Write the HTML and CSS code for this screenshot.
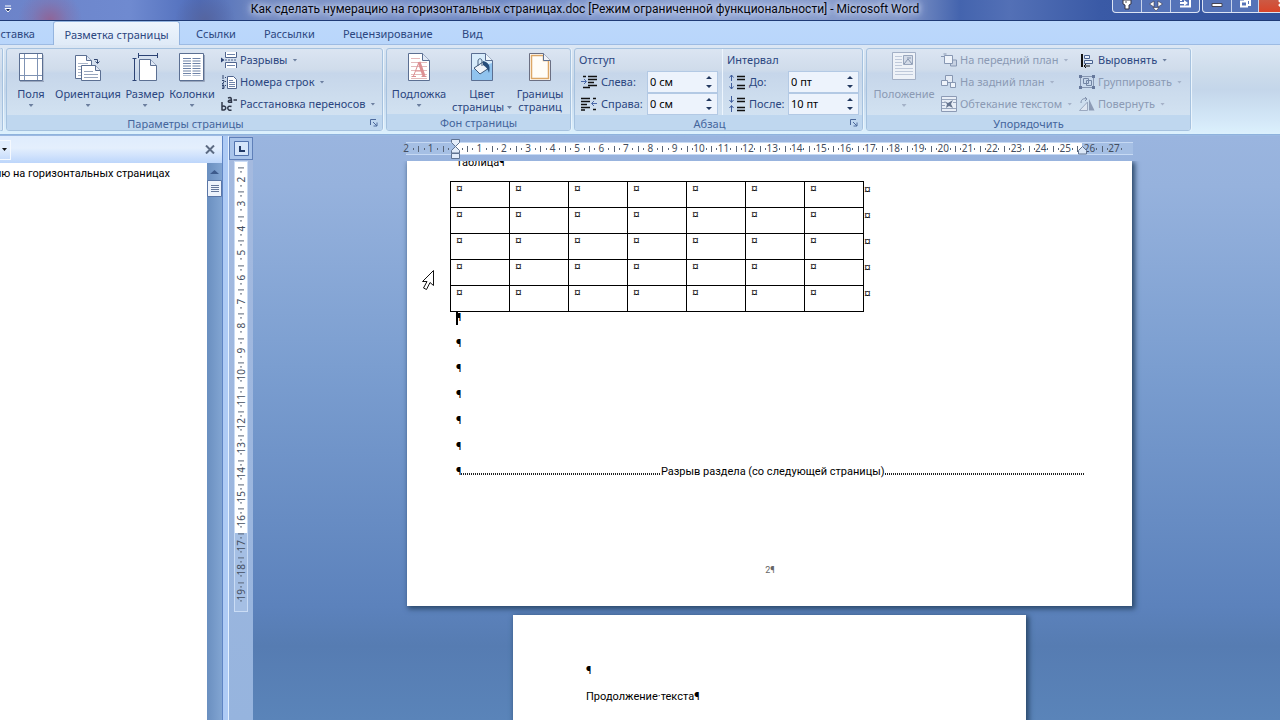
FILE: index.html
```html
<!DOCTYPE html>
<html lang="ru">
<head>
<meta charset="utf-8">
<title>Как сделать нумерацию на горизонтальных страницах.doc - Microsoft Word</title>
<link rel="stylesheet" href="styles.css">
</head>
<body>
<header class="titlebar">
  <button class="qat" aria-label="Настройка панели"><svg width="8" height="8" viewBox="0 0 8 8"><path d="M1 1h6M1 3.500h6L4 7z" stroke="#fff" fill="#10235c"/></svg></button>
  <h1 class="title">Как сделать нумерацию на горизонтальных страницах.doc [Режим ограниченной функциональности] - Microsoft Word</h1>
  <div class="winset">
    <button aria-label="Закрепить"><svg width="28" height="13" viewBox="0 0 28 13"><path d="M10 0h8v4l-2 1v4h-4V5l-2-1z" fill="#fff" stroke="#334"/><path d="M13 1v2" stroke="#555"/></svg></button>
    <button aria-label="Переместить"><svg width="28" height="13" viewBox="0 0 28 13"><path d="M12 1L7.500 4l4.500 3zM16 1l4.500 3-4.500 3zM11 7.500h6L14 11z" fill="#fff" stroke="#334" stroke-width=".6"/></svg></button>
    <button aria-label="Перейти"><svg width="28" height="13" viewBox="0 0 28 13"><path d="M10 0v1M9 6.500h10V0" stroke="#fff" stroke-width="2" fill="none"/><path d="M9 2h4V0l4 3-4 3V4H9z" fill="#fff"/></svg></button>
  </div>
  <div class="winset win">
    <button aria-label="Свернуть"><svg width="28" height="13" viewBox="0 0 28 13"><path d="M9 3.500h10v3H9z" fill="#fff" stroke="#445"/></svg></button>
    <button aria-label="Восстановить"><svg width="26" height="13" viewBox="0 0 26 13"><path d="M9 1.500h6v5H9zM12 0h6v5h-2" fill="none" stroke="#fff" stroke-width="2"/></svg></button>
    <button class="close" aria-label="Закрыть"><svg width="44" height="13" viewBox="0 0 44 13"><path d="M20 0l6 6M26 0l-6 6" stroke="#fff" stroke-width="2.500"/></svg></button>
  </div>
</header>

<nav class="tabs">
  <button class="tab first">ставка</button>
  <button class="tab active">Разметка страницы</button>
  <button class="tab t3">Ссылки</button>
  <button class="tab t4">Рассылки</button>
  <button class="tab t5">Рецензирование</button>
  <button class="tab t6">Вид</button>
</nav>

<div class="ribbon">
  <section class="group stub"></section>

  <section class="group g1">
    <div class="tools">
      <button class="big w48"><svg width="26" height="30" viewBox="0 0 26 30"><path d="M1.500 1.500h23v27h-23z" fill="#fff" stroke="#5b6f92"/><path d="M6.500 2v26M19.500 2v26M2 6.500h22M2 23.500h22" stroke="#7f93b4"/><path d="M2 29.500h24V3" fill="none" stroke="#9aa7bd"/></svg><span>Поля</span><i class="arr"></i></button>
      <button class="big w66"><svg width="28" height="30" viewBox="0 0 28 30"><path d="M1.500 3.500h11l5 5v18h-16z" fill="#fff" stroke="#5b6f92"/><path d="M12.500 3.500v5h5" fill="#dfe8f5" stroke="#5b6f92"/><path d="M4 11.500h10M4 14.500h6M4 17.500h3M4 20.500h3M4 23.500h3" stroke="#a9b5c9"/><path d="M7.500 13.500h14l5 5v10h-19z" fill="#fff" stroke="#5b6f92"/><path d="M21.500 13.500v5h5" fill="#dfe8f5" stroke="#5b6f92"/><path d="M10 19.500h9M10 22.500h14M10 25.500h14" stroke="#96a4bc"/><path d="M20 7.500h3.500V11M21.500 9.500l2 2 2-2" fill="none" stroke="#31456f"/></svg><span>Ориентация</span><i class="arr"></i></button>
      <button class="big w48"><svg width="26" height="30" viewBox="0 0 26 30"><path d="M6.500 3.500h19M6.500 1v5M25.500 1v5M2.500 6.500v22M.5 6.500h4M.5 28.500h4" stroke="#2c4374"/><path d="M7.500 7.500h11l6 6v15h-17z" fill="#fff" stroke="#5b6f92"/><path d="M18.500 7.500v6h6" fill="#dfe8f5" stroke="#5b6f92"/></svg><span>Размер</span><i class="arr"></i></button>
      <button class="big w46"><svg width="26" height="30" viewBox="0 0 26 30"><path d="M.5 1.500h24v27H.5z" fill="#fff" stroke="#5b6f92"/><path d="M8 6v18M17.500 6v18" stroke="#6e83a8" stroke-width="8" stroke-dasharray="1 1.500"/><path d="M1 29.500h24.500V3" fill="none" stroke="#9aa7bd"/></svg><span>Колонки</span><i class="arr"></i></button>
      <div class="list">
        <button class="row"><svg width="16" height="16" viewBox="0 0 16 16"><path d="M4.500 0v5.500h11V0M4.500 16v-5.500h11V16" fill="#fff" stroke="#50658e"/><path d="M6 2.500h8M6 13.500h8" stroke="#6f84aa"/><path d="M4 8h12" stroke="#50658e" stroke-dasharray="2 1"/><path d="M0 5.500L3.500 8 0 10.500z" fill="#2c4374"/></svg><span>Разрывы</span><i class="arr"></i></button>
        <button class="row"><svg width="16" height="16" viewBox="0 0 16 16"><path d="M6.500 2.500h6l3 3v9h-9z" fill="#fff" stroke="#50658e"/><path d="M8 6.500h4M8 8.500h6M8 10.500h6M8 12.500h6" stroke="#6f84aa"/><path d="M2 1v4M1 6.500h2v1.500L1 10h2M1 11.500h2v3H1M1 13h2" fill="none" stroke="#31456f"/><path d="M4.500 3v10" stroke="#31456f" stroke-dasharray="1 3"/></svg><span>Номера строк</span><i class="arr"></i></button>
        <button class="row"><svg width="16" height="16" viewBox="0 0 16 16"><g fill="none" stroke="#30384a" stroke-width="1.500"><path d="M1 6v8.500M1 10.500c5-2 5 4.500 0 3.500M10.500 10.500c-5-2-5 5 0 3.500"/><path d="M7 2c3.500-1.500 3.500 0 3.500 5M10.500 4c-4.500-.5-4 3.500 0 2M12.500 4H16"/></g></svg><span>Расстановка переносов</span><i class="arr"></i></button>
      </div>
    </div>
    <footer class="caption haslaunch"><span>Параметры страницы</span><button class="launch" aria-label="Параметры страницы: открыть"><svg width="8" height="8" viewBox="0 0 8 8"><path d="M.5 6V.5H6M3 3l4 4M7 3.500V7H3.500" fill="none" stroke="#4d6a9c"/></svg></button></footer>
  </section>

  <section class="group g2">
    <div class="tools">
      <button class="big w64"><svg width="24" height="30" viewBox="0 0 24 30"><path d="M1.500 1.500h14l7 7v20h-21z" fill="#fff" stroke="#5b6f92"/><path d="M15.500 1.500v7h7" fill="#dfe8f5" stroke="#5b6f92"/><path d="M4 6.500h9M4 10.500h16M4 14.500h16M4 18.500h16M4 22.500h16M4 26.500h16" stroke="#e3b9bb"/><path d="M6.500 24L12 10" fill="none" stroke="#dc8f92"/><path d="M12 10l5 14" fill="none" stroke="#dc8f92" stroke-width="3"/><path d="M8.500 19h7M4.500 24.500h4.500M14.500 24.500h5" fill="none" stroke="#dc8f92"/></svg><span>Подложка</span><i class="arr"></i></button>
      <button class="big w62"><svg width="24" height="30" viewBox="0 0 24 30"><path d="M1.500 1.500h14l7 7v20h-21z" fill="#90c3ee" stroke="#5b6f92"/><path d="M2 2h13v7h7v2L2 18z" fill="#d8ecfb"/><path d="M15.500 1.500v7h7" fill="#eef5fb" stroke="#5b6f92"/><path d="M4 16l9-6 6 6-9 6z" fill="#eef3f9" stroke="#3f5878"/><path d="M8 14V9c0-3 4-3 4 0v5" fill="none" stroke="#46607e"/><path d="M13 9c5 1 8 4 6 12-1-4-3-6-6-8z" fill="#274d7a"/></svg><span>Цвет<br>страницы<i class="arr inline"></i></span></button>
      <button class="big w54"><svg width="24" height="30" viewBox="0 0 24 30"><path d="M1.500 1.500h14l7 7v20h-21z" fill="#fff" stroke="#6b6f82"/><path d="M3.500 3.500h12v5h5v18h-17z" fill="#fffdf8" stroke="#dca766" stroke-width="1.500"/><path d="M15.500 1.500v7h7" fill="#eef2f8" stroke="#5b6f92"/></svg><span>Границы<br>страниц</span></button>
    </div>
    <footer class="caption"><span>Фон страницы</span></footer>
  </section>

  <section class="group g3">
    <div class="tools">
      <div class="fields indent">
        <h2>Отступ</h2>
        <svg width="16" height="16" viewBox="0 0 16 16"><path d="M2 2.500h3M7 2.500h9M7 5.500h9M7 8.500h6M7 11.500h9M2 13.500h7" stroke="#111" stroke-width="1.500"/><path d="M0 7.500h5M3 5l2.500 2.500L3 10" fill="none" stroke="#4a68a8"/></svg><label for="il">Слева:</label>
        <div class="spin"><input id="il" value="0 см"><button aria-label="Слева"><svg width="8" height="14" viewBox="0 0 8 14"><path d="M1 4l3-3 3 3zM1 10l3 3 3-3z" fill="#22385f"/></svg></button></div>
        <svg width="16" height="16" viewBox="0 0 16 16"><path d="M0 2.500h9M0 5.500h9M0 8.500h6M0 11.500h9M0 14h4M12 2.500h3M12 13.500h3" stroke="#111" stroke-width="1.500"/><path d="M16 7.500h-5M13 5l-2.500 2.500L13 10" fill="none" stroke="#4a68a8"/></svg><label for="ir">Справа:</label>
        <div class="spin"><input id="ir" value="0 см"><button aria-label="Справа"><svg width="8" height="14" viewBox="0 0 8 14"><path d="M1 4l3-3 3 3zM1 10l3 3 3-3z" fill="#22385f"/></svg></button></div>
      </div>
      <div class="fields spacing">
        <h2>Интервал</h2>
        <svg width="16" height="16" viewBox="0 0 16 16"><path d="M8 2.500h8M8 5.500h8M8 11.500h8M8 14.500h8" stroke="#111" stroke-width="1.500"/><path d="M2.500 7V1M.5 3.500l2-2.500 2 2.500M2.500 9v6M.5 12.500l2 2.500 2-2.500" fill="none" stroke="#3f5c9c"/></svg><label for="sb">До:</label>
        <div class="spin"><input id="sb" value="0 пт"><button aria-label="До"><svg width="8" height="14" viewBox="0 0 8 14"><path d="M1 4l3-3 3 3zM1 10l3 3 3-3z" fill="#22385f"/></svg></button></div>
        <svg width="16" height="16" viewBox="0 0 16 16"><path d="M8 2.500h8M8 5.500h8M8 11.500h8M8 14.500h8" stroke="#111" stroke-width="1.500"/><path d="M2.500 0v6M.5 4l2 2.500 2-2.500M2.500 16v-6M.5 12l2-2.500 2 2.500" fill="none" stroke="#3f5c9c"/></svg><label for="sa">После:</label>
        <div class="spin"><input id="sa" value="10 пт"><button aria-label="После"><svg width="8" height="14" viewBox="0 0 8 14"><path d="M1 4l3-3 3 3zM1 10l3 3 3-3z" fill="#22385f"/></svg></button></div>
      </div>
    </div>
    <footer class="caption haslaunch"><span>Абзац</span><button class="launch" aria-label="Абзац: открыть"><svg width="8" height="8" viewBox="0 0 8 8"><path d="M.5 6V.5H6M3 3l4 4M7 3.500V7H3.500" fill="none" stroke="#4d6a9c"/></svg></button></footer>
  </section>

  <section class="group g4">
    <div class="tools">
      <button class="big w74" disabled><svg width="24" height="30" viewBox="0 0 24 30"><path d="M.5.500h23v27H.5z" fill="#eef2f8" stroke="#a3b0c6"/><path d="M3 4.500h7M3 7.500h7M3 10.500h7M3 13.500h7M3 16.500h18M3 19.500h18M3 22.500h18" stroke="#bfc9da"/><path d="M11.500 3.500h9v9h-9z" fill="#d3dbe8" stroke="#98a6bd"/><path d="M12 12l4-5 4 5M15 6h4" stroke="#8594ae" fill="none"/></svg><span>Положение</span><i class="arr"></i></button>
      <div class="list l-a">
        <button class="row" disabled><svg width="16" height="16" viewBox="0 0 16 16"><path d="M0 4.500h3M2.500 2h3M9.500 8h6v6h-6z" fill="#c8d2e2" stroke="#8797b2"/><path d="M3.500 3.500h8v8h-8z" fill="#eef3fa" stroke="#8797b2"/></svg><span>На передний план</span><i class="arr"></i></button>
        <button class="row" disabled><svg width="16" height="16" viewBox="0 0 16 16"><path d="M4.500 1.500h7v7h-7z" fill="#e4ebf5" stroke="#8797b2"/><path d="M.5 6.500h6v5h-6zM9.500 8.500h5v5h-5z" fill="#eef3fa" stroke="#8797b2"/></svg><span>На задний план</span><i class="arr"></i></button>
        <button class="row" disabled><svg width="16" height="16" viewBox="0 0 16 16"><path d="M.5.500h15v15H.5z" fill="#e8eef7" stroke="#8c9ab4"/><path d="M1 3.500h14M1 12.500h14M1 6.500h3M1 9.500h3M12 6.500h3" stroke="#98a6bd"/><path d="M3 5l4 2 5-3-2 4 2 4-4-2-3 2 1-4z" fill="#66758f"/></svg><span>Обтекание текстом</span><i class="arr"></i></button>
      </div>
      <div class="list">
        <button class="row"><svg width="16" height="16" viewBox="0 0 16 16"><path d="M3 2v13" stroke="#111" stroke-width="2"/><path d="M5.500 3.500h5v3h-5zM5.500 8.500h8v3h-8z" fill="#e6eefa" stroke="#4a628f"/><path d="M11 14H5M7 12l-2 2 2 2" stroke="#111" fill="none"/></svg><span>Выровнять</span><i class="arr"></i></button>
        <button class="row" disabled><svg width="16" height="16" viewBox="0 0 16 16"><path d="M1.500 2.500h13v11h-13z" fill="none" stroke="#8797b2"/><path d="M4.500 4.500h5v5h-5zM7.500 6.500h5v5h-5z" fill="none" stroke="#7486a5"/><path d="M0 1h3v3H0zM13 1h3v3h-3zM0 12h3v3H0zM13 12h3v3h-3z" fill="#66789b"/></svg><span>Группировать</span><i class="arr"></i></button>
        <button class="row" disabled><svg width="16" height="16" viewBox="0 0 16 16"><path d="M.5 14.500h8L8.500 6z" fill="#dfe6f1" stroke="#9ba9c0"/><path d="M10 14.500V3l5.500 11.500z" fill="#8d9bb5"/><path d="M2 7c0-4 3-5 6-4M6 1l2 2-2 2" fill="none" stroke="#8191ad"/></svg><span>Повернуть</span><i class="arr"></i></button>
      </div>
    </div>
    <footer class="caption"><span>Упорядочить</span></footer>
  </section>
</div>

<div class="work">
  <aside class="pane">
    <div class="panehead"><button class="combo" aria-label="Вид панели"><i class="arr"></i></button><button class="x" aria-label="Закрыть"><svg width="10" height="9" viewBox="0 0 10 9"><path d="M1 .5l8 8M9 .5l-8 8" stroke="#5c6b83" stroke-width="2"/></svg></button></div>
    <div class="panebody">
      <p class="mapitem"><span>ию на горизонтальных страницах</span></p>
      <div class="scroll"><svg width="15" height="17" viewBox="0 0 15 17"><path d="M3 11l4.500-4 4.500 4z" fill="#3d5b8c"/></svg><svg width="15" height="17" viewBox="0 0 15 17"><path d="M.5.500h14v16H.5z" fill="#eef3fb" stroke="#5a76a6"/><path d="M4 5.500h8M4 7.500h8M4 9.500h8M4 11.500h8" stroke="#66789b"/></svg></div>
    </div>
  </aside>
  <div class="split"></div>
  <div class="gutter">
    <button class="corner" aria-label="Табуляция"><svg width="15" height="15" viewBox="0 0 15 15"><path d="M.5.500h14v14H.5z" fill="#d6e6fa" stroke="#5273ad"/><path d="M6 5v5h5" stroke="#223a66" stroke-width="2" fill="none"/></svg></button>
    <div class="vruler"><b>2</b><b>3</b><b>4</b><b>5</b><b>6</b><b>7</b><b>8</b><b>9</b><b>10</b><b>11</b><b>12</b><b>13</b><b>14</b><b>15</b><b>16</b><b>17</b><b>18</b><b>19</b></div>
  </div>
  <main class="view">
    <div class="rulerbar">
      <div class="hruler"><div class="scale"><b>2</b><b>1</b><b></b><b>1</b><b>2</b><b>3</b><b>4</b><b>5</b><b>6</b><b>7</b><b>8</b><b>9</b><b>10</b><b>11</b><b>12</b><b>13</b><b>14</b><b>15</b><b>16</b><b>17</b><b>18</b><b>19</b><b>20</b><b>21</b><b>22</b><b>23</b><b>24</b><b>25</b><b>26</b><b>27</b></div></div>
      <svg class="mark left" width="11" height="22" viewBox="0 0 11 22"><path d="M1.500 1.500h8v3l-4 4-4-4zM1.500 15v-2.500l4-4 4 4V15zM1.500 15.500h8v5h-8z" fill="#e3edfa" stroke="#5f7391"/></svg>
      <svg class="mark right" width="11" height="9" viewBox="0 0 11 9"><path d="M1.500 8V4.500l4-4 4 4v3.500z" fill="#dbe7f7" stroke="#5f7391"/></svg>
    </div>
    <div class="canvas">
      <article class="page wide">
        <p class="cut">Таблица¶</p>
        <table class="grid">
          <tr><td>¤</td><td>¤</td><td>¤</td><td>¤</td><td>¤</td><td>¤</td><td>¤</td><td>¤</td></tr>
          <tr><td>¤</td><td>¤</td><td>¤</td><td>¤</td><td>¤</td><td>¤</td><td>¤</td><td>¤</td></tr>
          <tr><td>¤</td><td>¤</td><td>¤</td><td>¤</td><td>¤</td><td>¤</td><td>¤</td><td>¤</td></tr>
          <tr><td>¤</td><td>¤</td><td>¤</td><td>¤</td><td>¤</td><td>¤</td><td>¤</td><td>¤</td></tr>
          <tr><td>¤</td><td>¤</td><td>¤</td><td>¤</td><td>¤</td><td>¤</td><td>¤</td><td>¤</td></tr>
        </table>
        <div class="paras"><p class="caret">¶</p><p>¶</p><p>¶</p><p>¶</p><p>¶</p><p>¶</p><p class="break"><span>¶</span><i></i><span>Разрыв раздела (со следующей страницы)</span><i></i></p></div>
        <p class="folio">2¶</p>
        <svg class="pointer" width="14" height="22" viewBox="0 0 14 22"><path d="M12.500 1.500v15l-3.500-3-3.500 7-3-1.500 3.500-6.500H1.500z" fill="#fff" stroke="#111"/></svg>
      </article>
      <article class="page tall"><p>¶</p><p>Продолжение·текста¶</p></article>
    </div>
  </main>
</div>
</body>
</html>
```
FILE: styles.css
```css
* { box-sizing: border-box; }
body { margin: 0; height: 100vh; overflow: hidden; display: flex; flex-direction: column; background: #9cb9e2; font: 11px/14px "Noto Sans", "Open Sans", sans-serif; color: #2b4680; }
button { font: inherit; color: inherit; background: none; border: 0; padding: 0; margin: 0; display: flex; align-items: center; white-space: nowrap; }
h1, h2, p { margin: 0; font-weight: normal; }
svg { flex: none; display: block; }
.arr { flex: none; width: 5px; height: 3px; background: #6c7f9f; clip-path: polygon(0 0, 100% 0, 50% 100%); }

/* Title bar */
.titlebar { flex: none; height: 21px; display: flex; align-items: flex-start; border-bottom: 1px solid #1f3a75; overflow: hidden;
  background: radial-gradient(circle at 50px 20px, #8f6598 0, #8f659855 18px, transparent 32px), radial-gradient(ellipse at 128px 14px, #a9b9e6 0, #a9bbe888 22px, transparent 34px), radial-gradient(circle at 205px 20px, #5565a0 0, transparent 30px), linear-gradient(90deg, #6c83c9 0, #6f8ad0 130px, #4e6cba 200px, #7088c0 260px, #7c92c6 320px, #6d88c4 500px, #8fa3d2 700px, #8397c8 900px, #4464ae 960px, #5370b6 1010px, #3a5aa6 1100px, #31519b); }
.qat { width: 15px; height: 18px; justify-content: center; }
.title { flex: 1; text-align: center; font-family: Roboto, "Open Sans", sans-serif; font-size: 12px; line-height: 18px; color: #05070f; white-space: nowrap; padding-left: 43px; text-shadow: 0 0 5px #dbe3f6, 0 0 8px #c5d1ee, 0 0 10px #c5d1ee; }
.winset { display: flex; height: 13px; border: 1px solid #dce4f4; border-top: 0; border-radius: 0 0 4px 4px; background: #5573b8; overflow: hidden; flex: none; }
.winset button + button { border-left: 1px solid #c9d4ec; }
.win { margin-left: 2px; margin-right: -24px; }
.close { background: linear-gradient(#cc5a44, #d8452a); }

/* Tabs */
.tabs { flex: none; height: 24px; display: flex; background: linear-gradient(#bcd8fb, #b9d6fb); border-bottom: 1px solid #9dbbe3; }
.tab { height: 24px; padding: 2px 18px 0; }
.first { width: 53px; padding: 2px 18px 0 0; justify-content: flex-end; }
.active { width: 127px; justify-content: center; padding: 2px 0 0; border: 1px solid #94b4df; border-bottom: 0; border-radius: 3px 3px 0 0; background: linear-gradient(#eef5fd, #dfeaf7); }
.t3 { width: 72px; padding-left: 16px; }
.t4 { width: 78px; padding-left: 12px; }
.t5 { width: 118px; padding-left: 13px; }
.t6 { padding-left: 14px; }

/* Ribbon */
.ribbon { flex: none; height: 90px; display: flex; gap: 3px; padding: 3px 0 3px; background: linear-gradient(#dce7f4 0, #cddceb 30%, #c4d6ea 50%, #d4e8f8 85%, #dcf1fd 100%); border-bottom: 1px solid #8fb3dd; }
.group { display: flex; flex-direction: column; border: 1px solid #a6c2df; border-radius: 3px; overflow: hidden; background: linear-gradient(#dbe5f2 0, #d0dceb 25%, #c6d6ea 30%, #cfdfef 70%, #d6e6f5 100%); box-shadow: 1px 0 0 #eaf4fc; }
.stub { width: 3px; border-left: 0; }
.g1 { width: 377px; }
.g2 { width: 185px; }
.g3 { width: 289px; }
.g4 { width: 325px; }
.tools { height: 66px; display: flex; }
.caption { flex: 1; padding-top: 2px; background: #bfd7ef; color: #44659c; display: flex; align-items: center; justify-content: center; position: relative; }
.haslaunch { padding-right: 18px; }
.launch { position: absolute; right: 4px; top: 4px; }
.big { flex-direction: column; align-items: center; justify-content: flex-start; padding-top: 3px; line-height: 13px; }
.big span { margin-top: 5px; text-align: center; }
.big .arr { margin-top: 4px; }
.big .inline { display: inline-block; margin: 0 0 2px 3px; }
.w46 { width: 46px; } .w48 { width: 48px; } .w54 { width: 54px; } .w62 { width: 62px; } .w64 { width: 64px; } .w66 { width: 66px; } .w74 { width: 74px; }
.list { display: flex; flex-direction: column; }
.g1 .list { padding-left: 6px; }
.l-a { width: 138px; }
.row { height: 22px; gap: 3px; }
.row .arr { margin-left: 2px; }
button:disabled { color: #8b9ab4; }
button:disabled .arr { background: #a5b2c8; }
.fields { display: grid; grid-auto-rows: 22px; align-items: center; padding-left: 4px; }
.fields h2 { grid-column: 1 / -1; font-size: 11px; line-height: 14px; }
.fields svg { justify-self: start; margin-left: 2px; }
.indent { grid-template-columns: 22px 46px 71px; }
.spacing { grid-template-columns: 22px 39px 71px; margin-left: 4px; border-left: 1px solid #edf5fd; }
.spin { display: flex; align-items: center; height: 22px; background: #edf3fc; border: 1px solid #b3c9e4; }
.spin input { flex: 1; min-width: 0; border: 0; padding: 0 2px; background: none; font: inherit; color: #000; }
.spin button { width: 16px; height: 18px; justify-content: center; }
.spin button svg { margin: 0; }

/* Navigation pane */
.work { flex: 1; min-height: 0; display: flex; background: #9cb9e2; padding-top: 1px; }
.pane { width: 223px; flex: none; display: flex; flex-direction: column; border-right: 1px solid #5f85c4; }
.panehead { height: 27px; flex: none; display: flex; align-items: center; justify-content: space-between; padding-right: 7px; background: linear-gradient(#dfecfd, #e4effd 45%, #bdd6fb); }
.combo { width: 11px; height: 20px; padding-left: 2px; border: 1px solid #f5f9fe; border-left: 0; }
.combo .arr { background: #111; }
.panebody { flex: 1; min-height: 0; display: flex; background: #fff; font-family: Roboto, "Open Sans", sans-serif; }
.mapitem { flex: 1; padding-top: 4px; color: #000; white-space: nowrap; display: flex; }
.mapitem span { width: 170px; display: flex; justify-content: flex-end; }
.scroll { width: 15px; background: linear-gradient(90deg, #6a8fc0, #82a5d2); }
.split { width: 6px; flex: none; background: #aecbf5; border-right: 1px solid #e4f1ff; }

/* Rulers */
.gutter { width: 24px; flex: none; display: flex; flex-direction: column; align-items: center; background: linear-gradient(#a5badf, #96b4de); }
.corner { width: 24px; height: 23px; margin-top: 1px; justify-content: center; border: 1px solid #5f80b9; background: #a9c4ea; }
.vruler { width: 14px; height: 451px; flex: none; margin-top: 1px; padding: 5px 0; display: flex; flex-direction: column; border: 1px solid #cadcf5; background: linear-gradient(#fff 0 371px, #a5bfe4 371px); }
b { flex: 1; display: flex; align-items: center; justify-content: center; min-width: 0; min-height: 0; font-weight: normal; font-size: 10px; line-height: 11px; color: #444e60;
  background: linear-gradient(#5a6678, #5a6678) 0 50% / 1px 6px no-repeat, linear-gradient(#5a6678, #5a6678) 22% 50% / 1px 2px no-repeat, linear-gradient(#5a6678, #5a6678) 80% 50% / 1px 2px no-repeat; }
.scale b:first-child { background: linear-gradient(#5a6678, #5a6678) 80% 50% / 1px 2px no-repeat; }
.vruler b { writing-mode: vertical-rl; transform: rotate(180deg);
  background: linear-gradient(#5a6678, #5a6678) 50% 100% / 6px 1px no-repeat, linear-gradient(#5a6678, #5a6678) 50% 20% / 2px 1px no-repeat, linear-gradient(#5a6678, #5a6678) 50% 80% / 2px 1px no-repeat; }
.view { flex: 1; min-width: 0; display: flex; flex-direction: column; margin-right: -6px; background: linear-gradient(#9ab5df 0, #96b2dd 50px, #7b9ed0 230px, #5c82bc 470px, #567cb2 510px, #5a84b9 100%); }
.rulerbar { height: 25px; flex: none; display: flex; justify-content: center; align-items: flex-start; padding: 6px 0; position: relative; }
.hruler { width: 727px; height: 13px; border: 1px solid #c7daf4; border-width: 1px 0; background: linear-gradient(90deg, #a5bfe4 49px, #fff 49px 676px, #a5bfe4 676px); }
.scale { display: flex; width: 732px; height: 11px; margin-left: -12px; }
.mark { position: absolute; }
.left { left: calc(50% - 320px); top: 2px; }
.right { left: calc(50% + 307px); top: 10px; }

/* Document */
.canvas { flex: 1; min-height: 0; overflow: hidden; display: flex; flex-direction: column; align-items: center; gap: 9px; color: #000; font-family: Roboto, "Open Sans", sans-serif; }
.page { background: #fff; flex: none; box-shadow: 2px 2px 5px 1px #2c4a6c; position: relative; }
.wide { width: 725px; height: 445px; padding: 0 48px 0 49px; }
.cut { margin-top: -5px; }
.grid { border-collapse: collapse; table-layout: fixed; width: 473px; margin: 11px 0 0 -6px; font-family: "Open Sans", sans-serif; }
.grid td { width: 59px; height: 26px; padding: 0 0 0 5px; border: 1px solid #000; vertical-align: top; font-size: 12px; line-height: 13px; }
.grid td:last-child { border: 0; padding: 1px 0 0; }
.paras { height: 180px; margin-top: -1px; display: flex; flex-direction: column; }
.paras p { flex: 1; }
.caret::before { content: ""; float: left; width: 2px; height: 14px; margin-right: -2px; background: #000; }
.break { display: flex; white-space: nowrap; }
.break i { flex: 1; height: 2px; margin-top: 8px; background: repeating-linear-gradient(90deg, #222 0 1px, #fff 1px 2px); }
.folio { padding-top: 72px; text-align: center; font-size: 9px; color: #666; }
.pointer { position: absolute; left: 14px; top: 108px; }
.tall { width: 513px; height: 725px; padding: 49px 73px; }
.tall p { line-height: 14px; margin-bottom: 12px; }
```
